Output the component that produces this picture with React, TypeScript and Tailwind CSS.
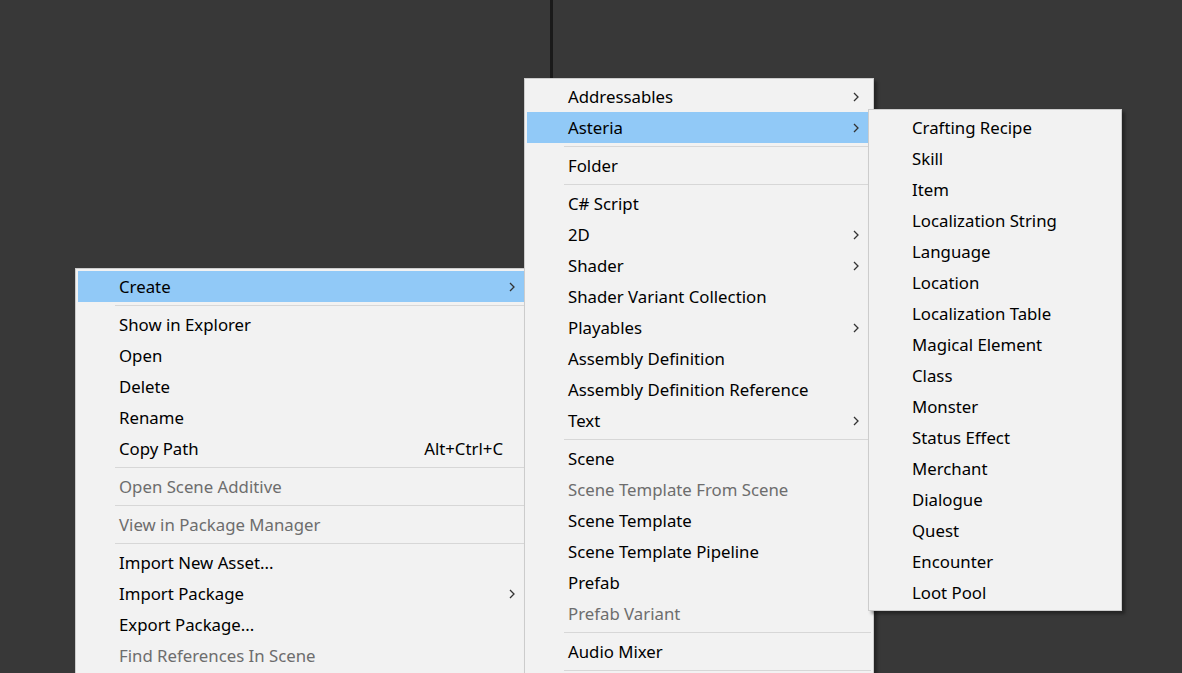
type Entry =
  | { sep: true }
  | { label: string; arrow?: boolean; disabled?: boolean; active?: boolean; shortcut?: string };

const projectMenu: Entry[] = [
  { label: "Create", arrow: true, active: true },
  { sep: true },
  { label: "Show in Explorer" },
  { label: "Open" },
  { label: "Delete" },
  { label: "Rename" },
  { label: "Copy Path", shortcut: "Alt+Ctrl+C" },
  { sep: true },
  { label: "Open Scene Additive", disabled: true },
  { sep: true },
  { label: "View in Package Manager", disabled: true },
  { sep: true },
  { label: "Import New Asset..." },
  { label: "Import Package", arrow: true },
  { label: "Export Package..." },
  { label: "Find References In Scene", disabled: true },
];

const createMenu: Entry[] = [
  { label: "Addressables", arrow: true },
  { label: "Asteria", arrow: true, active: true },
  { sep: true },
  { label: "Folder" },
  { sep: true },
  { label: "C# Script" },
  { label: "2D", arrow: true },
  { label: "Shader", arrow: true },
  { label: "Shader Variant Collection" },
  { label: "Playables", arrow: true },
  { label: "Assembly Definition" },
  { label: "Assembly Definition Reference" },
  { label: "Text", arrow: true },
  { sep: true },
  { label: "Scene" },
  { label: "Scene Template From Scene", disabled: true },
  { label: "Scene Template" },
  { label: "Scene Template Pipeline" },
  { label: "Prefab" },
  { label: "Prefab Variant", disabled: true },
  { sep: true },
  { label: "Audio Mixer" },
  { sep: true },
];

const asteriaMenu: Entry[] = [
  "Crafting Recipe",
  "Skill",
  "Item",
  "Localization String",
  "Language",
  "Location",
  "Localization Table",
  "Magical Element",
  "Class",
  "Monster",
  "Status Effect",
  "Merchant",
  "Dialogue",
  "Quest",
  "Encounter",
  "Loot Pool",
].map((label) => ({ label }));

function Chevron() {
  return (
    <svg width="6" height="10" viewBox="0 0 6 10" className="shrink-0">
      <path d="M1 1 L5 5 L1 9" fill="none" stroke="#333" strokeWidth="1.3" />
    </svg>
  );
}

function Menu({ items, className }: { items: Entry[]; className: string }) {
  return (
    <div
      className={
        "absolute border border-[#cccccc] bg-[#f2f2f2] p-[2px] shadow-[3px_3px_3px_rgba(0,0,0,0.35)] " +
        className
      }
    >
      {items.map((it, i) =>
        "sep" in it ? (
          <div key={i} className="py-[3px] pl-[37px]">
            <div className="h-px bg-[#d7d7d7]" />
          </div>
        ) : (
          <div
            key={i}
            className={
              "flex h-[31px] items-center pl-[41px] pr-[12px] " +
              (it.active ? "bg-[#91c9f7] " : "") +
              (it.disabled ? "text-[#6d6d6d]" : "text-[#000000]")
            }
          >
            <span className="flex-1 whitespace-nowrap pt-[2px]">{it.label}</span>
            {it.shortcut && <span className="mr-[12px] whitespace-nowrap pt-[2px]">{it.shortcut}</span>}
            {it.arrow && <Chevron />}
          </div>
        )
      )}
    </div>
  );
}

export default function App() {
  return (
    <div
      className="relative h-[673px] w-[1182px] overflow-hidden bg-[#383838] text-[16.8px] leading-none"
      style={{ fontFamily: '"Noto Sans", "Open Sans", sans-serif' }}
    >
      <div className="flex h-full">
        <div className="w-[550px]" />
        <div className="w-[3px] bg-[#1a1a1a]" />
        <div className="flex-1" />
      </div>
      <Menu items={projectMenu} className="left-[75px] top-[268px] w-[455px]" />
      <Menu items={createMenu} className="left-[524px] top-[78px] w-[350px]" />
      <Menu items={asteriaMenu} className="left-[868px] top-[109px] w-[254px]" />
    </div>
  );
}
